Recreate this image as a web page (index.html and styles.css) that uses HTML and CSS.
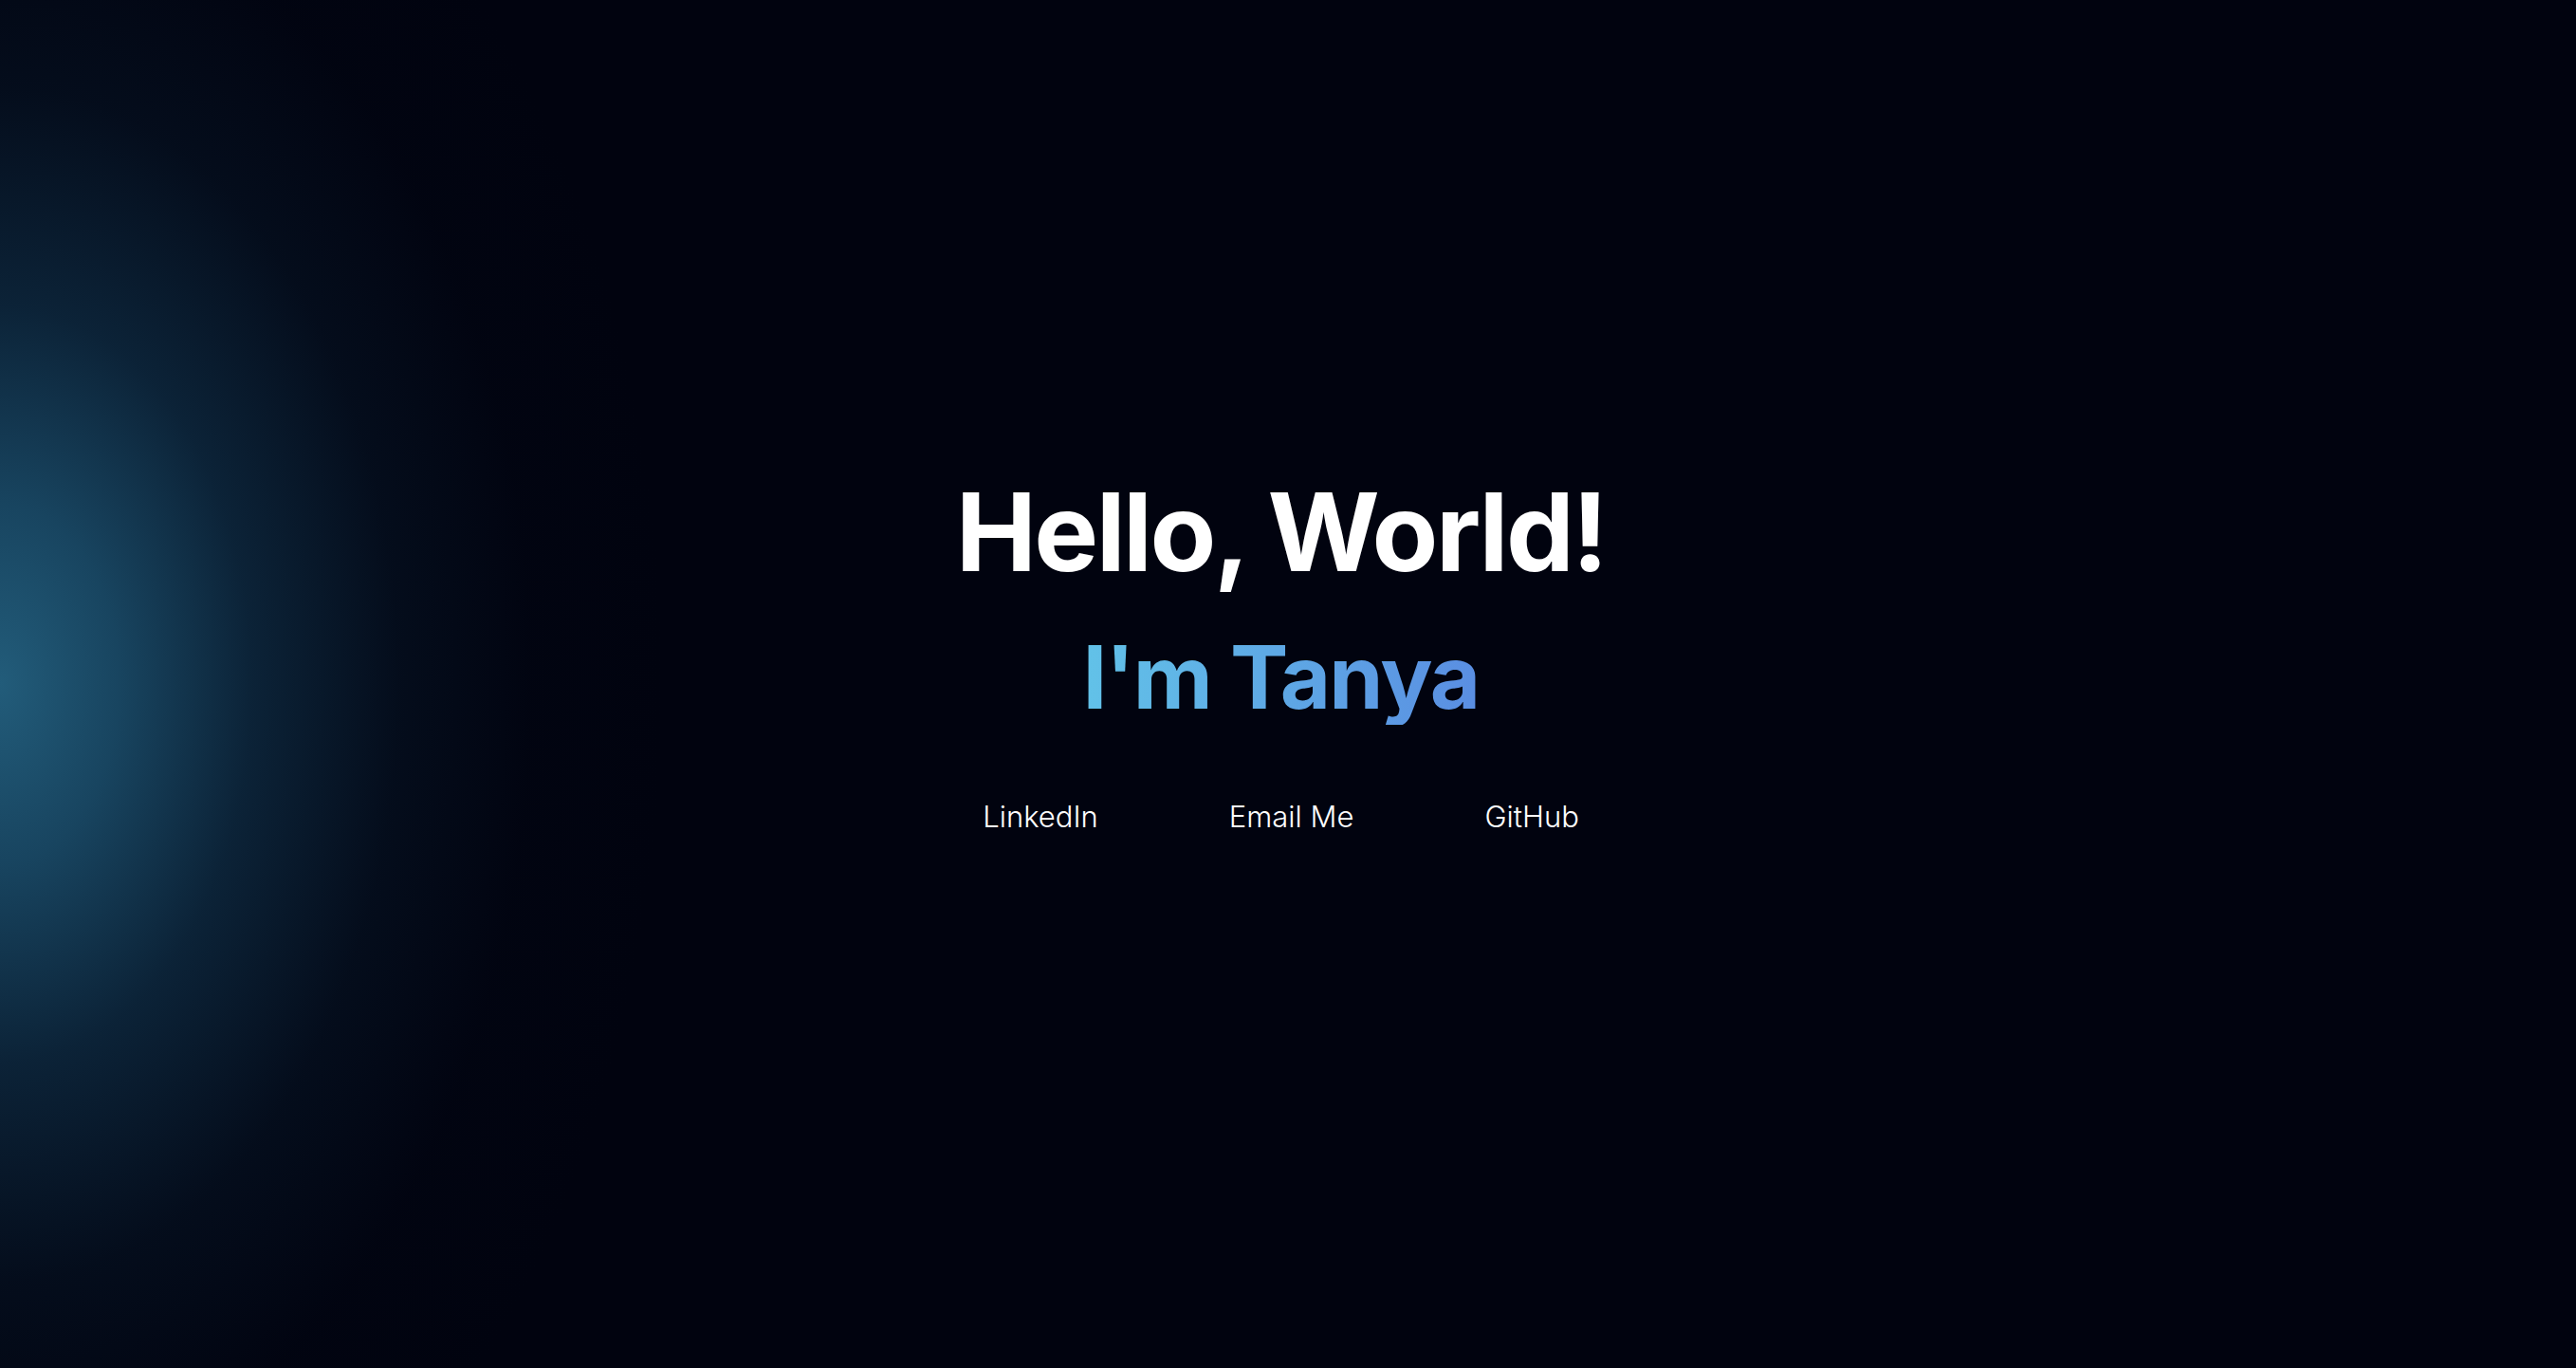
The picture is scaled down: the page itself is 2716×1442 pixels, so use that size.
FILE: index.html
```html
<!DOCTYPE html>
<html lang="en">
<head>
<meta charset="utf-8">
<title>Tanya</title>
<link rel="stylesheet" href="styles.css">
</head>
<body>
<main class="hero">
  <h1 class="hero-title">Hello, World!</h1>
  <h2 class="hero-name">I'm Tanya</h2>
  <nav class="hero-links">
    <a class="hero-link" href="#">LinkedIn</a>
    <a class="hero-link" href="#">Email Me</a>
    <a class="hero-link" href="#">GitHub</a>
  </nav>
</main>
</body>
</html>
```

FILE: styles.css
```css
html, body {
  margin: 0;
  padding: 0;
  height: 100%;
}
body {
  background-color: #01030f;
  background-image: radial-gradient(ellipse 700px 1050px at 0 50%, rgba(34, 92, 122, 1) 0%, rgba(28, 80, 110, 0.85) 18%, rgba(18, 54, 80, 0.62) 38%, rgba(10, 30, 50, 0.36) 60%, rgba(4, 12, 28, 0.14) 80%, rgba(1, 3, 15, 0) 100%);
  background-repeat: no-repeat;
  font-family: Inter, "Liberation Sans", sans-serif;
  color: #fff;
  overflow: hidden;
}
.hero {
  height: 100%;
  display: flex;
  flex-direction: column;
  align-items: center;
  justify-content: center;
  padding-right: 15px;
  padding-bottom: 65px;
  box-sizing: border-box;
}
.hero-title {
  margin: 0;
  font-size: 114px;
  font-weight: 700;
  line-height: 1.1;
  letter-spacing: -0.022em;
}
.hero-name {
  margin: 39px 0 0;
  font-size: 92px;
  font-weight: 700;
  line-height: 1.1;
  letter-spacing: -0.02em;
  background: linear-gradient(90deg, #62c2e8 0%, #5a8ee2 100%);
  -webkit-background-clip: text;
  background-clip: text;
  color: transparent;
}
.hero-links {
  margin-top: 78px;
  display: flex;
  gap: 138px;
}
.hero-link {
  color: #fff;
  text-decoration: none;
  font-size: 31px;
  font-weight: 300;
}
```
